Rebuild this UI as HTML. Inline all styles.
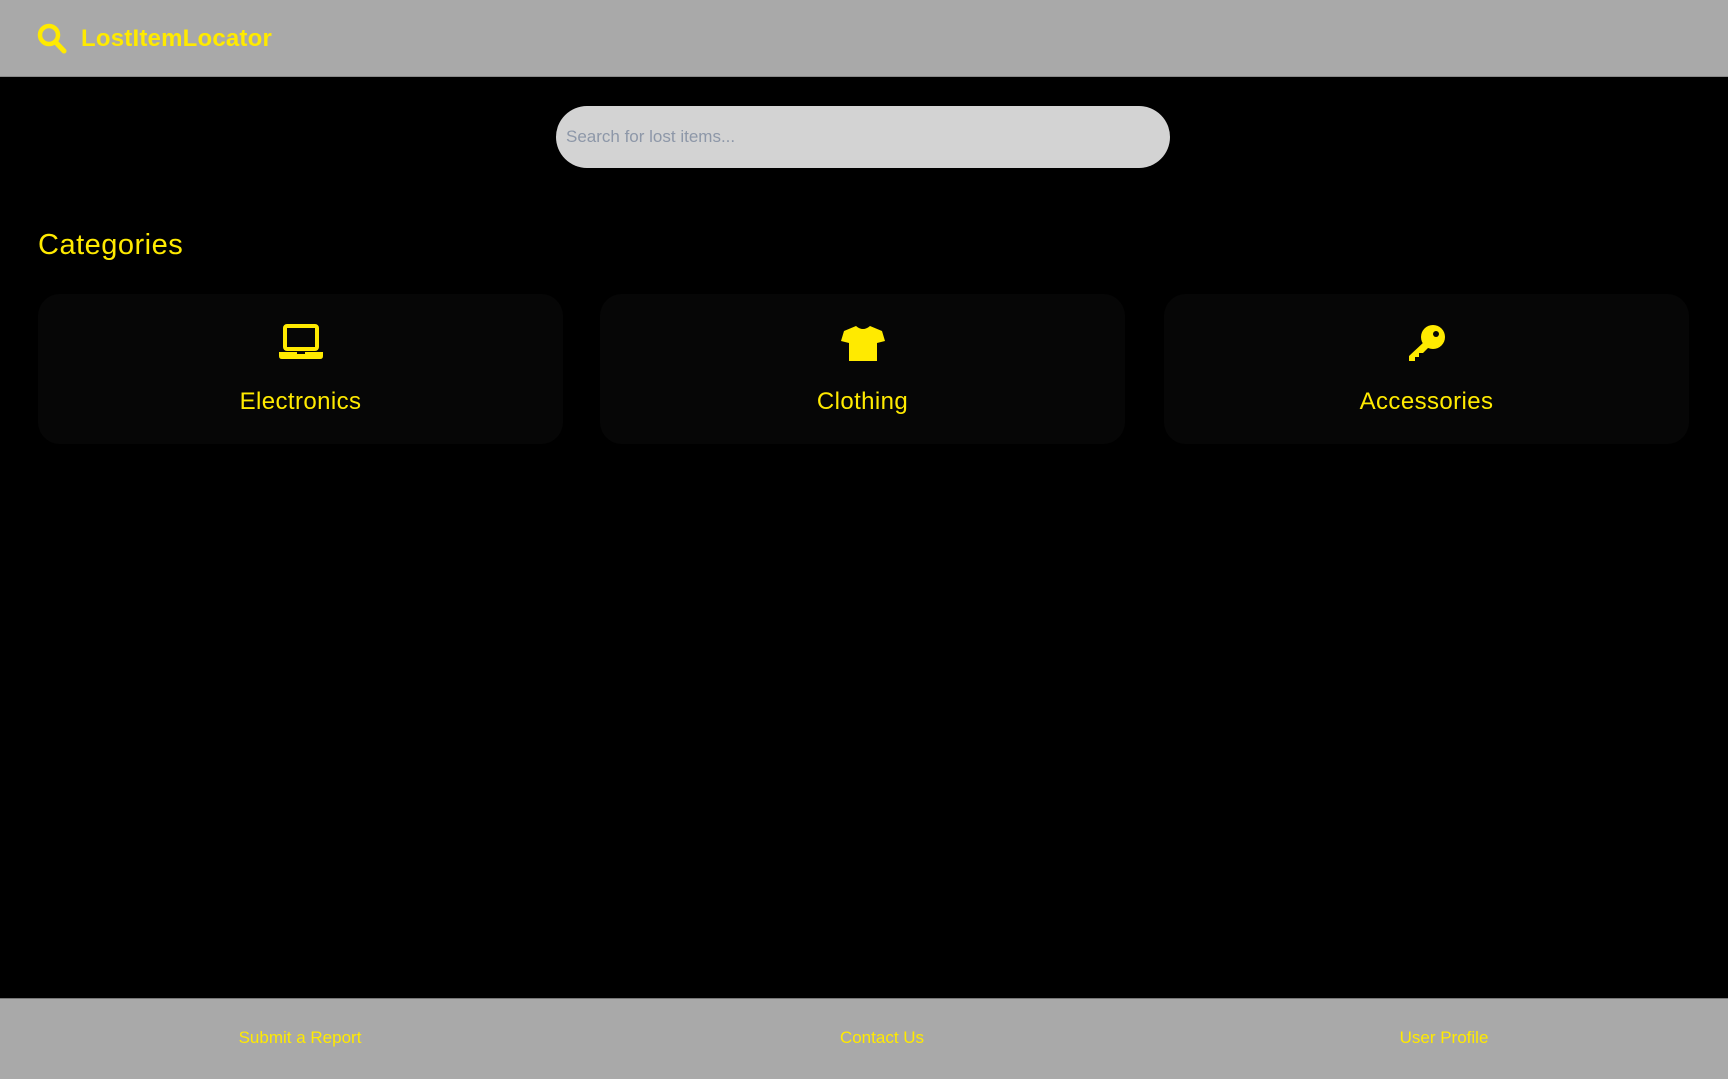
<!DOCTYPE html>
<html><head><meta charset="utf-8"><style>
*{box-sizing:border-box;margin:0;padding:0}
html,body{width:1728px;height:1079px;overflow:hidden;background:#000;font-family:"Liberation Sans",sans-serif;color:#ffea00}
.hdr{position:absolute;left:0;top:0;width:1728px;height:77px;background:#a9a9a9;border-bottom:1px solid #8a8a8a}
.logo{position:absolute;left:37px;top:23px;display:flex;align-items:center}
.logo span{font-weight:bold;font-size:24px;margin-left:14px;letter-spacing:0.2px}
.search{position:absolute;left:556px;top:106px;width:614px;height:62px;border-radius:31px;background:#d3d3d3;padding-left:10px;line-height:62px;font-size:17px;color:#8d97a8}
h2{position:absolute;left:38px;top:229px;font-size:29px;font-weight:normal;letter-spacing:0.5px}
.card{position:absolute;top:294px;width:525px;height:150px;background:#060606;border-radius:22px;text-align:center}
.card svg{position:absolute;left:50%;top:30px;transform:translateX(-50%)}
.lbl{position:absolute;left:0;width:100%;top:94px;font-size:24px;letter-spacing:0.4px}
.ftr{position:absolute;left:0;top:998px;width:1728px;height:81px;background:#a9a9a9;border-top:1px solid #777}
.ftr a{position:absolute;top:29px;font-size:17px;color:#ffea00;text-decoration:none;transform:translateX(-50%)}
</style></head><body>
<div class="hdr"><div class="logo">
<svg width="30" height="32" viewBox="0 0 30 32"><circle cx="12" cy="12" r="9" fill="none" stroke="#ffea00" stroke-width="4.5"/><line x1="18.5" y1="19" x2="27" y2="28" stroke="#ffea00" stroke-width="5" stroke-linecap="round"/></svg>
<span>LostItemLocator</span></div></div>
<div class="search">Search for lost items...</div>
<h2>Categories</h2>
<div class="card" style="left:38px">
<svg width="44" height="36" viewBox="0 0 44 36"><rect x="6" y="2" width="32" height="23" rx="2" fill="none" stroke="#ffea00" stroke-width="4"/><path d="M0 28H44V32Q44 35 41 35H3Q0 35 0 32Z" fill="#ffea00"/><rect x="18" y="28" width="8" height="2" fill="#060606"/></svg>
<div class="lbl">Electronics</div></div>
<div class="card" style="left:600px">
<svg width="44" height="38" viewBox="0 0 44 38"><path d="M15 2L3 7L0 17L8 19L8 37H36V19L44 17L41 7L29 2Q22 8 15 2Z" fill="#ffea00"/></svg>
<div class="lbl">Clothing</div></div>
<div class="card" style="left:1164px">
<svg width="40" height="38" viewBox="0 0 40 38"><circle cx="26" cy="13" r="12" fill="#ffea00"/><circle cx="29" cy="10" r="3" fill="#060606"/><path d="M17 18L2 32V37H8V33H12V29H16L22 23Z" fill="#ffea00"/></svg>
<div class="lbl">Accessories</div></div>
<div class="ftr">
<a style="left:300px">Submit a Report</a>
<a style="left:882px">Contact Us</a>
<a style="left:1444px">User Profile</a>
</div>
</body></html>
